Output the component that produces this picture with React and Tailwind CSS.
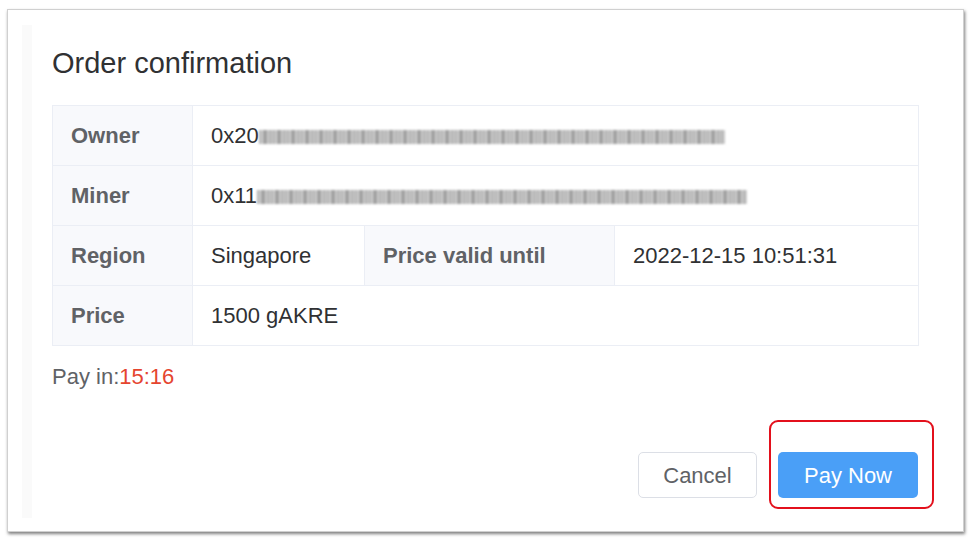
import React from 'react';

const FONT = { fontFamily: '"Liberation Sans", Arial, Helvetica, sans-serif' };

const Redacted = ({ width }) => (
  <span
    className="inline-block h-[14px] align-middle blur-[1px] opacity-90 bg-[repeating-linear-gradient(90deg,#9a9a9a_0px,#cfcfcf_3px,#858585_6px,#c8c8c8_9px,#a4a4a4_12px,#dedede_14px)]"
    style={{ width }}
  />
);

const Label = ({ children }) => (
  <td className="bg-[#f8f9fc] border border-[#ebeef5] px-[18px] text-[22px] font-bold text-[#606266]">
    {children}
  </td>
);

const Value = ({ children, colSpan }) => (
  <td
    colSpan={colSpan}
    className="border border-[#ebeef5] px-[18px] text-[22px] text-[#303133] whitespace-nowrap"
  >
    {children}
  </td>
);

export default function App() {
  return (
    <div className="w-[973px] h-[545px] bg-white pt-[9px] pl-[7px]" style={FONT}>
      <div className="relative w-[957px] h-[523px] bg-white border border-[#d0d0d0] shadow-[1px_2px_3px_rgba(0,0,0,0.5)] flex">
        <div className="ml-[14px] mt-[15px] mb-[13px] w-[10px] bg-[#fafafa]" />

        <div className="flex-1 pl-[20px] pt-[33px] flex flex-col">
          <div className="h-[40px] leading-[40px] text-[29px] text-[#303133]">
            Order confirmation
          </div>

          <table className="mt-[22px] w-[866px] table-fixed border-collapse">
            <colgroup>
              <col className="w-[140px]" />
              <col className="w-[172px]" />
              <col className="w-[250px]" />
              <col className="w-[304px]" />
            </colgroup>
            <tbody>
              <tr className="h-[60px]">
                <Label>Owner</Label>
                <Value colSpan={3}>
                  0x20<Redacted width={466} />
                </Value>
              </tr>
              <tr className="h-[60px]">
                <Label>Miner</Label>
                <Value colSpan={3}>
                  0x11<Redacted width={490} />
                </Value>
              </tr>
              <tr className="h-[60px]">
                <Label>Region</Label>
                <Value>Singapore</Value>
                <Label>Price valid until</Label>
                <Value>2022-12-15 10:51:31</Value>
              </tr>
              <tr className="h-[60px]">
                <Label>Price</Label>
                <Value colSpan={3}>1500 gAKRE</Value>
              </tr>
            </tbody>
          </table>

          <div className="mt-[16px] h-[30px] leading-[30px] text-[22px] text-[#606266]">
            Pay in:<span className="text-[#e5452f]">15:16</span>
          </div>

          <div className="mt-[60px] w-[866px] flex justify-end gap-[21px]">
            <button className="w-[119px] h-[46px] rounded-[5px] border border-[#dcdfe6] bg-white text-[22px] text-[#606266]">
              Cancel
            </button>
            <div className="relative">
              <button className="w-[140px] h-[46px] rounded-[5px] bg-[#4a9ff7] text-[22px] text-white">
                Pay Now
              </button>
              <div className="absolute -left-[9px] -top-[32px] w-[165px] h-[89px] rounded-[9px] border-2 border-[#e3101c] pointer-events-none" />
            </div>
          </div>
        </div>
      </div>
    </div>
  );
}
